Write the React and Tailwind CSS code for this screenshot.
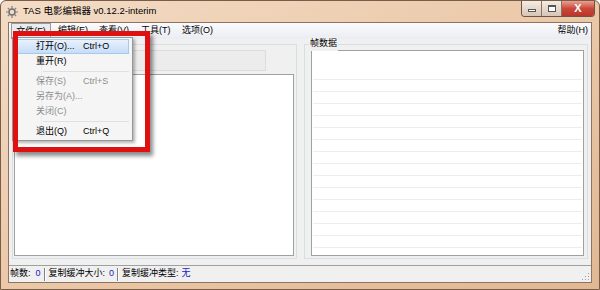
import React from 'react';

const font = "font-['Liberation_Sans','Noto_Sans_CJK_SC',sans-serif]";

const MenuItem = ({ label, shortcut, disabled, active }) => (
  <div
    className={`relative mx-[3px] flex h-[15px] items-center whitespace-nowrap ${active ? 'border border-[#a8c8ec] bg-gradient-to-b from-[#e8f2fd] to-[#c6dcf7]' : 'border border-transparent'} ${disabled ? 'text-[#8d8d8d]' : 'text-black'}`}
  >
    <span className="ml-[19px] w-[47px] shrink-0">{label}</span>
    <span>{shortcut}</span>
  </div>
);

const Sep = () => <div className="my-[2px] ml-[30px] mr-[3px] h-px bg-[#e0e0e0]" />;

export default function App() {
  const lines = Array.from({ length: 15 }, (_, i) => i);
  return (
    <div className={`relative flex h-[290px] w-[600px] flex-col overflow-hidden rounded-t-[6px] border border-[#7a5d46] bg-gradient-to-br from-[#f3dcc6] via-[#ebc8a8] to-[#e0b894] text-[9px] ${font}`}>
      {/* title bar */}
      <div className="flex h-[21px] shrink-0 items-center pl-[4px]">
        <svg width="14" height="14" viewBox="0 0 14 14" className="mr-[4px]">
          <circle cx="7" cy="7" r="3" fill="none" stroke="#707070" strokeWidth="1.5" />
          <path d="M7 1v3M7 10v3M1 7h3M10 7h3M2.8 2.8l2 2M9.2 9.2l2 2M2.8 11.2l2-2M9.2 4.8l2-2" stroke="#808080" strokeWidth="1.2" />
        </svg>
        <span className="text-[9.5px] text-black">TAS 电影编辑器 v0.12.2-interim</span>
        <div className="ml-auto mr-[4px] flex h-[16px] self-start overflow-hidden rounded-b-[4px] border border-t-0 border-[#6e5442]">
          <div className="flex w-[20px] items-center justify-center border-r border-[#8a7060] bg-gradient-to-b from-[#f4ece4] to-[#d7c5b6]">
            <div className="mt-[3px] h-[3px] w-[8px] border border-[#555] bg-white" />
          </div>
          <div className="flex w-[20px] items-center justify-center border-r border-[#8a7060] bg-gradient-to-b from-[#f4ece4] to-[#d7c5b6]">
            <div className="h-[7px] w-[8px] border border-[#555] border-t-2 bg-white" />
          </div>
          <div className="flex w-[32px] items-center justify-center bg-gradient-to-b from-[#e8a090] via-[#c9483a] to-[#b8352a] text-[11px] font-bold text-white">
            X
          </div>
        </div>
      </div>

      {/* client */}
      <div className="mx-[7px] flex min-h-0 flex-1 flex-col border border-[#8f7360] bg-[#f0f0f0]">
        {/* menu bar */}
        <div className="flex h-[16px] shrink-0 items-center bg-gradient-to-b from-[#fbfbfd] to-[#e9ecf2] text-black">
          <div className="ml-[2px] flex h-[16px] w-[40px] items-center justify-center border border-b-0 border-[#9a9a9a] bg-[#e8ebf0]">文件(F)</div>
          <span className="ml-[7px] w-[41px]">编辑(E)</span>
          <span className="w-[42px]">查看(V)</span>
          <span className="w-[41px]">工具(T)</span>
          <span>选项(O)</span>
          <span className="ml-auto mr-[3px]">帮助(H)</span>
        </div>

        {/* panels */}
        <div className="flex min-h-0 flex-1 gap-[7px] px-[3px] pt-[5px]">
          <div className="flex w-[285px] flex-col border border-[#d5dfe5] pb-[2px] pl-[1px] pr-[2px]">
            <div className="ml-[2px] mr-[28px] mt-[5px] h-[21px] border border-[#dcdcdc] bg-[#ececec]" />
            <div className="mt-[3px] flex-1 border border-[#a0a0a0] bg-white" />
          </div>
          <div className="relative flex min-h-0 flex-1 flex-col border border-[#d5dfe5] pb-[2px] pl-[6px] pr-[3px] pt-[5px]">
            <span className="absolute -top-[8px] left-[4px] bg-[#f0f0f0] px-[1px] text-black">帧数据</span>
            <div className="flex min-h-0 flex-1 flex-col overflow-hidden border border-[#a0a0a0] bg-white pt-[28px]">
              {lines.map((i) => (
                <div key={i} className="mx-[1px] mb-[11px] h-px shrink-0 bg-[#ededed]" />
              ))}
            </div>
          </div>
        </div>

        {/* status bar */}
        <div className="mt-[6px] flex h-[17px] shrink-0 items-center border-t border-[#a0a0a0] bg-[#f0f0f0] text-black">
          <span className="ml-[1px]">帧数:</span>
          <span className="ml-[5px] text-[#2020c0]">0</span>
          <div className="mx-[3px] h-[13px] w-[2px] border-l border-r border-l-[#808080] border-r-white" />
          <span>复制缓冲大小:</span>
          <span className="ml-[4px] text-[#2020c0]">0</span>
          <div className="mx-[3px] h-[13px] w-[2px] border-l border-r border-l-[#808080] border-r-white" />
          <span>复制缓冲类型:</span>
          <span className="ml-[3px] text-[#2020c0]">无</span>
          <svg width="8" height="8" viewBox="0 0 8 8" className="ml-auto mr-[1px] mt-[6px]">
            <g fill="#a0a0a0">
              <rect x="6" y="0" width="1" height="1" />
              <rect x="3" y="3" width="1" height="1" />
              <rect x="6" y="3" width="1" height="1" />
              <rect x="0" y="6" width="1" height="1" />
              <rect x="3" y="6" width="1" height="1" />
              <rect x="6" y="6" width="1" height="1" />
            </g>
          </svg>
        </div>
      </div>
      <div className="h-[6px] shrink-0" />

      {/* dropdown menu */}
      <div className="absolute left-[11px] top-[36px] w-[121px] border border-[#979797] bg-[#f5f5f5] py-[1px] shadow-[2px_2px_3px_rgba(0,0,0,0.3)]">
        <div className="absolute bottom-[2px] left-[28px] top-[2px] w-px bg-[#ebebeb]" />
        <MenuItem label="打开(O)..." shortcut="Ctrl+O" active />
        <MenuItem label="重开(R)" />
        <Sep />
        <MenuItem label="保存(S)" shortcut="Ctrl+S" disabled />
        <MenuItem label="另存为(A)..." disabled />
        <MenuItem label="关闭(C)" disabled />
        <Sep />
        <MenuItem label="退出(Q)" shortcut="Ctrl+Q" />
      </div>

      {/* red annotation box */}
      <div className="absolute left-[12px] top-[30px] h-[121px] w-[137px] border-[5px] border-[#e01010] shadow-[3px_4px_4px_rgba(0,0,0,0.45)]" />
    </div>
  );
}
